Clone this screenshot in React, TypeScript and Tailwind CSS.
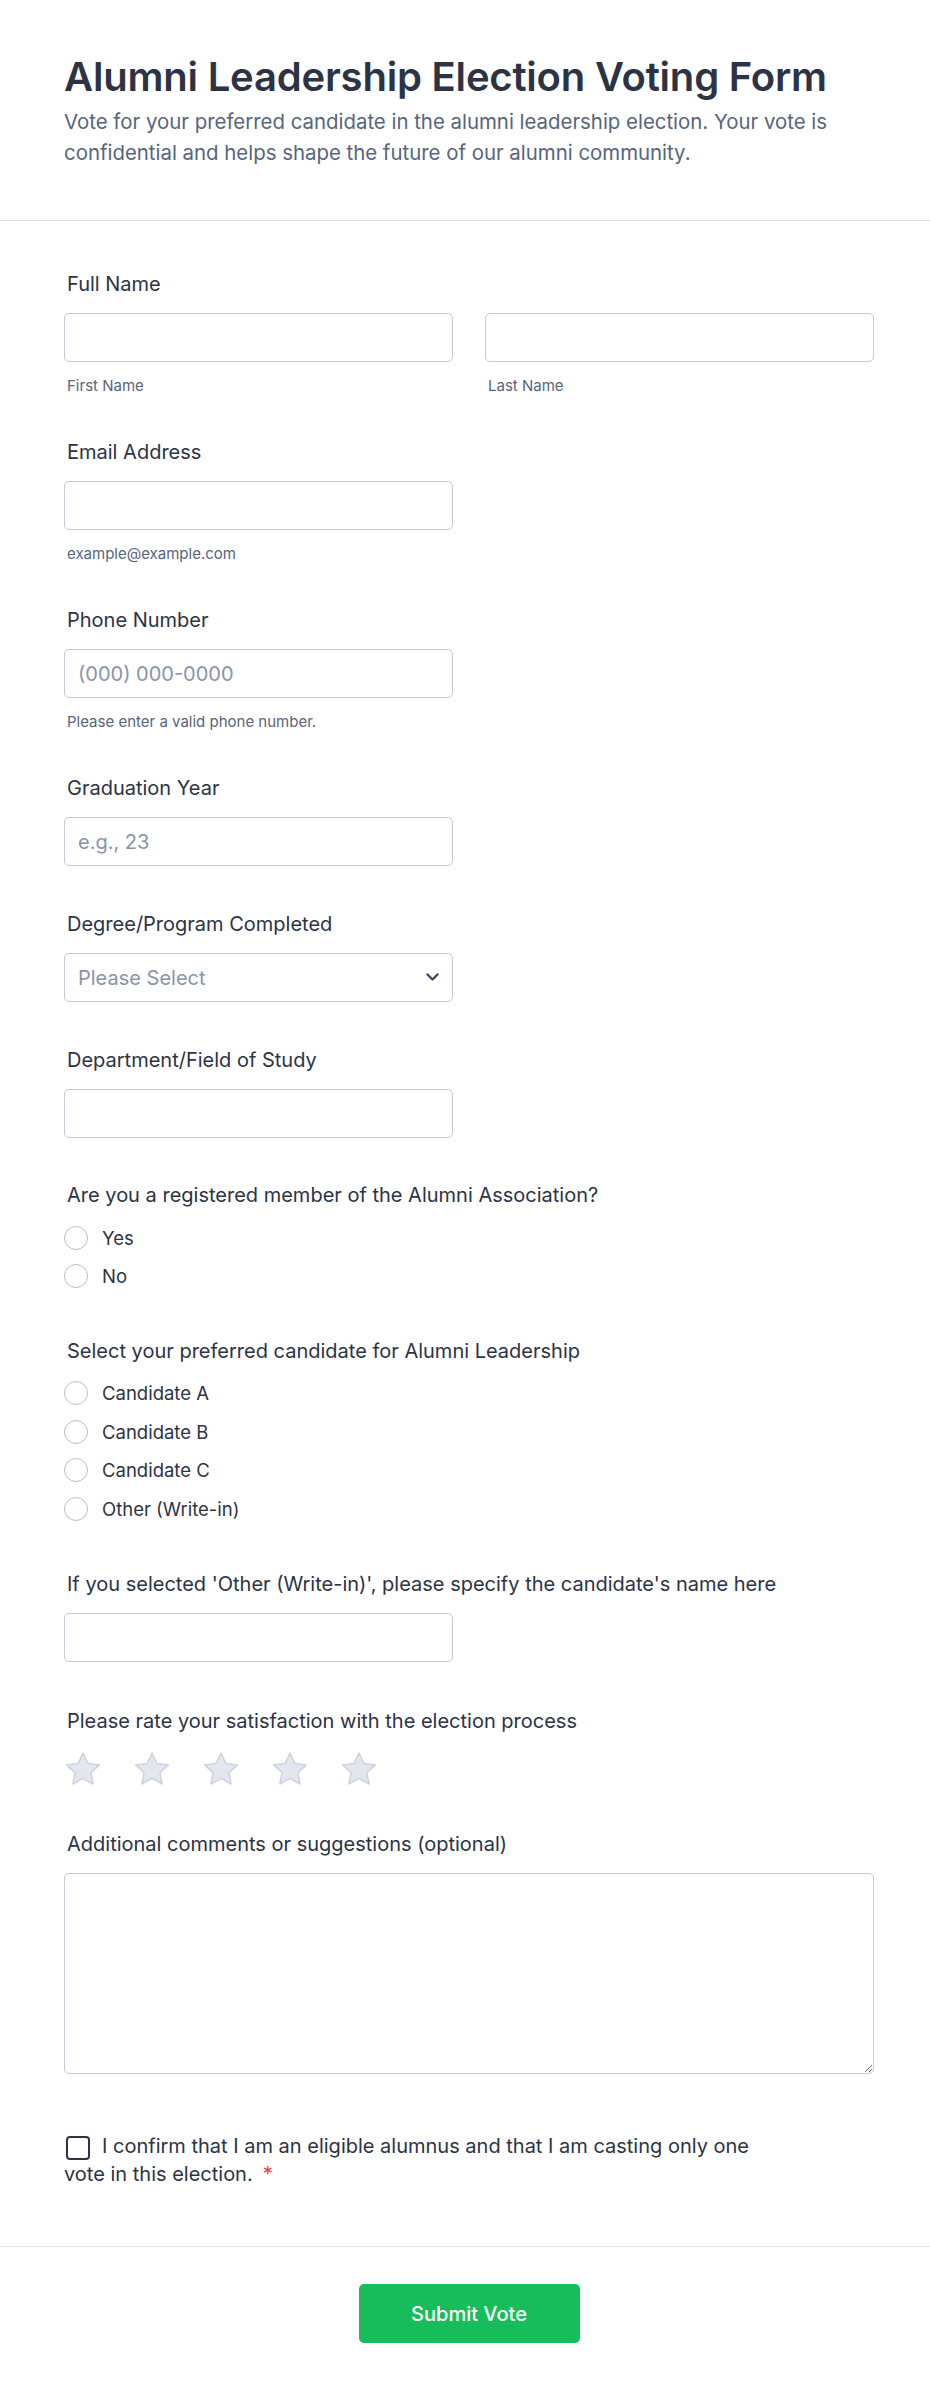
import React from "react";

const labelCls = "block pl-[3px] text-[20px] leading-[24px] font-normal text-[#2c3345]";
const inputCls =
  "block h-[49px] w-full rounded-[5px] border border-[#c3cad8] bg-white px-[13px] text-[20px] text-[#2c3345] outline-none placeholder:text-[#8894ab]";
const subCls = "block pl-[3px] text-[15px] leading-[20px] text-[#57647e]";

function Radio({ label, h }: { label: string; h: string }) {
  return (
    <label className={`flex items-center gap-[14px] ${h}`}>
      <span className="h-[24px] w-[24px] shrink-0 rounded-full border border-[#b8bdc9] bg-white" />
      <span className="text-[18.5px] leading-[24px] text-[#2c3345]">{label}</span>
    </label>
  );
}

function Star() {
  return (
    <svg width="38" height="35" viewBox="0 0 24 22" className="shrink-0">
      <path
        d="M12 1.2l3.1 6.6 7.2.9-5.3 5 1.4 7.1L12 17.3l-6.4 3.5L7 13.7 1.7 8.7l7.2-.9z"
        fill="#e3e6ee"
        stroke="#ccd1dd"
        strokeWidth="0.9"
        strokeLinejoin="round"
      />
    </svg>
  );
}

export default function App() {
  return (
    <div className="min-h-[2393px] bg-white font-['Inter','Liberation_Sans',sans-serif] text-[#2c3345]">
      {/* Header */}
      <header className="border-b border-[#dfe2ea] pb-[52px] pl-[64px] pr-[56px] pt-[53px]">
        <h1 className="text-[40px] font-semibold leading-[48px] tracking-[-0.2px] text-[#2c3345]">
          Alumni Leadership Election Voting Form
        </h1>
        <p className="mt-[5px] text-[20.4px] leading-[31px] text-[#57647e]">
          Vote for your preferred candidate in the alumni leadership election. Your vote is
          confidential and helps shape the future of our alumni community.
        </p>
      </header>

      {/* Fields */}
      <main className="pl-[64px] pr-[56px] pt-[51px] pb-[58px]">
        {/* Full Name */}
        <div>
          <span className={labelCls}>Full Name</span>
          <div className="mt-[17px] grid grid-cols-2 gap-x-[32px]">
            <div>
              <input className={inputCls} />
              <span className={`${subCls} mt-[14px]`}>First Name</span>
            </div>
            <div>
              <input className={inputCls} />
              <span className={`${subCls} mt-[14px]`}>Last Name</span>
            </div>
          </div>
        </div>

        {/* Email */}
        <div className="mt-[44px] w-[389px]">
          <span className={labelCls}>Email Address</span>
          <input className={`${inputCls} mt-[17px]`} />
          <span className={`${subCls} mt-[14px]`}>example@example.com</span>
        </div>

        {/* Phone */}
        <div className="mt-[44px] w-[389px]">
          <span className={labelCls}>Phone Number</span>
          <input className={`${inputCls} mt-[17px]`} placeholder="(000) 000-0000" />
          <span className={`${subCls} mt-[14px]`}>Please enter a valid phone number.</span>
        </div>

        {/* Graduation Year */}
        <div className="mt-[44px] w-[389px]">
          <span className={labelCls}>Graduation Year</span>
          <input className={`${inputCls} mt-[17px]`} placeholder="e.g., 23" />
        </div>

        {/* Degree */}
        <div className="mt-[46px] w-[389px]">
          <span className={labelCls}>Degree/Program Completed</span>
          <div className="relative mt-[17px]">
            <select
              defaultValue=""
              className="block h-[49px] w-full appearance-none rounded-[5px] border border-[#c3cad8] bg-white px-[13px] text-[20px] text-[#8894ab] outline-none"
            >
              <option value="">Please Select</option>
              <option>Bachelor's</option>
              <option>Master's</option>
              <option>Doctorate</option>
            </select>
            <svg
              width="13"
              height="9"
              viewBox="0 0 13 9"
              className="pointer-events-none absolute right-[14px] top-[20px]"
            >
              <path d="M1.5 1.5l5 5 5-5" fill="none" stroke="#3e4a63" strokeWidth="2.4" strokeLinecap="round" strokeLinejoin="round" />
            </svg>
          </div>
        </div>

        {/* Department */}
        <div className="mt-[46px] w-[389px]">
          <span className={labelCls}>Department/Field of Study</span>
          <input className={`${inputCls} mt-[17px]`} />
        </div>

        {/* Member */}
        <div className="mt-[45px]">
          <span className={labelCls}>Are you a registered member of the Alumni Association?</span>
          <div className="mt-[12px]">
            <Radio label="Yes" h="h-[38px]" />
            <Radio label="No" h="h-[38px]" />
          </div>
        </div>

        {/* Candidate */}
        <div className="mt-[44px]">
          <span className={labelCls}>Select your preferred candidate for Alumni Leadership</span>
          <div className="mt-[11px]">
            <Radio label="Candidate A" h="h-[38.5px]" />
            <Radio label="Candidate B" h="h-[38.5px]" />
            <Radio label="Candidate C" h="h-[38.5px]" />
            <Radio label="Other (Write-in)" h="h-[38.5px]" />
          </div>
        </div>

        {/* Write-in */}
        <div className="mt-[44px]">
          <span className={labelCls}>
            If you selected 'Other (Write-in)', please specify the candidate's name here
          </span>
          <input className={`${inputCls} mt-[17px] !w-[389px]`} />
        </div>

        {/* Rating */}
        <div className="mt-[47px]">
          <span className={labelCls}>Please rate your satisfaction with the election process</span>
          <div className="mt-[18px] flex h-[35px] items-center gap-[31px]">
            <Star />
            <Star />
            <Star />
            <Star />
            <Star />
          </div>
        </div>

        {/* Comments */}
        <div className="mt-[46px]">
          <span className={labelCls}>Additional comments or suggestions (optional)</span>
          <textarea className="mt-[17px] block h-[201px] w-full rounded-[5px] border border-[#c3cad8] bg-white px-[13px] py-[10px] text-[20px] outline-none" />
        </div>

        {/* Confirm */}
        <p className="mt-[58px] max-w-[700px] text-[20px] leading-[28px] text-[#2c3345]">
          <span className="ml-[2px] mr-[12px] inline-block h-[24px] w-[24px] rounded-[4px] border-2 border-[#2c3345] bg-white align-[-7px]" />
          I confirm that I am an eligible alumnus and that I am casting only one vote in this
          election.<span className="ml-[10px] text-[#f23a3c]">*</span>
        </p>
      </main>

      {/* Footer */}
      <footer className="flex justify-center border-t border-[#e3e6ee] pb-[50px] pl-[64px] pr-[56px] pt-[37px]">
        <button className="h-[59px] w-[221px] rounded-[5px] bg-[#18bd5b] text-[20px] font-medium text-white">
          Submit Vote
        </button>
      </footer>
    </div>
  );
}
